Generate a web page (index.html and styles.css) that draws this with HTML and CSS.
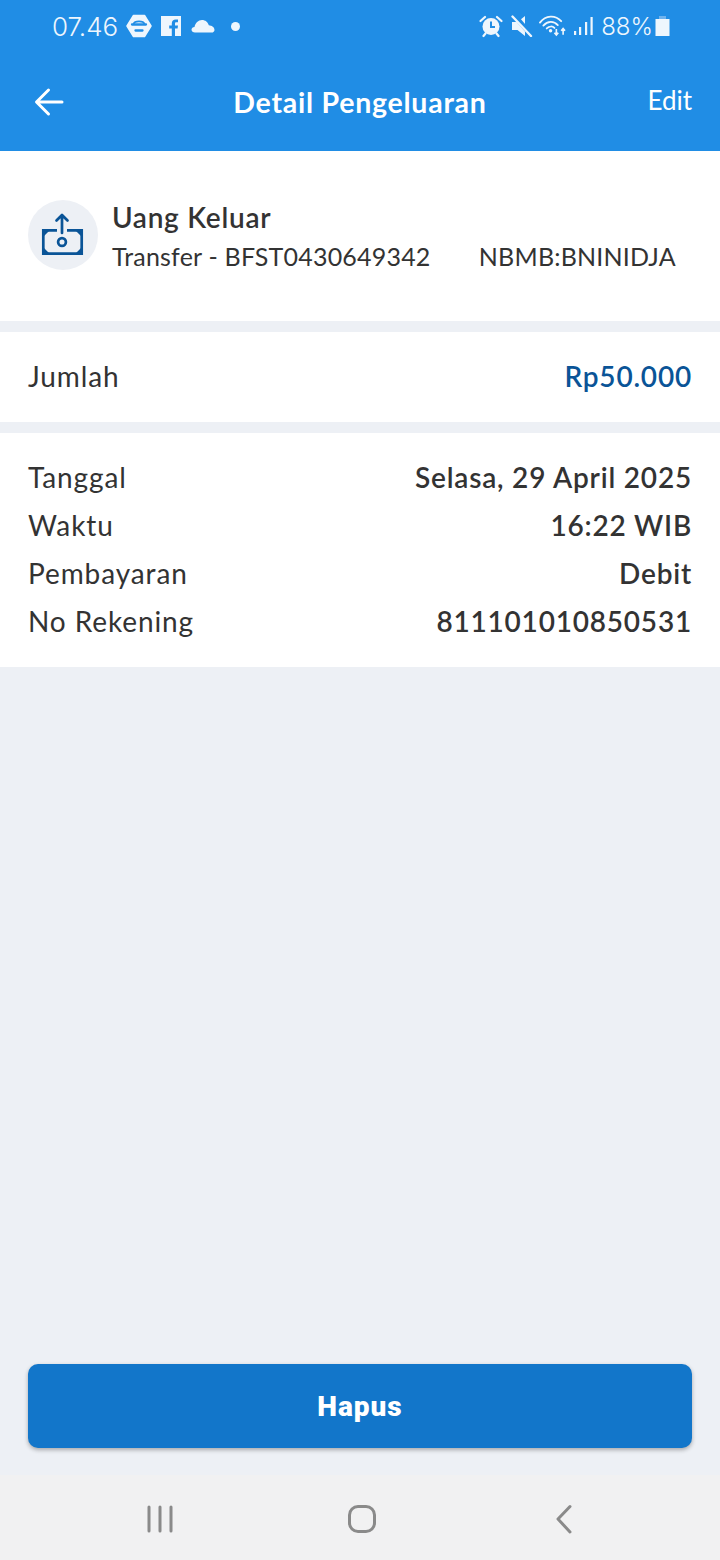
FILE: index.html
```html
<!DOCTYPE html>
<html lang="id">
<head>
<meta charset="utf-8">
<title>Detail Pengeluaran</title>
<link rel="stylesheet" href="styles.css">
</head>
<body>
<div class="screen">
  <header class="top">
    <div class="status">
      <div class="status-left">
        <span class="clock">07.46</span>
        <svg class="si" width="26" height="24" viewBox="0 0 26 24"><path fill="#eef6fd" d="M7.500 1.500h11L25 12l-6.500 10.500h-11L1 12z" stroke="#eef6fd" stroke-width="1.500" stroke-linejoin="round"/><path fill="none" stroke="#208de5" stroke-width="2.300" stroke-linecap="round" d="M6 10.500h14M9.500 16.500h7"/><path fill="none" stroke="#208de5" stroke-width="1.600" d="M7.500 10c1-3.500 10-3.500 11 0"/></svg>
        <svg class="si fb" width="20" height="20" viewBox="0 0 20 20"><path fill="#eef6fd" d="M0 0h20v20h-6v-7.500h2.600l.4-3h-3V7.700c0-.9.300-1.400 1.500-1.400H17V3.600c-.3 0-1.200-.1-2.300-.1-2.300 0-3.900 1.400-3.900 3.900v2.100H8.200v3h2.600V20H0z"/></svg>
        <svg class="si cloud" width="24" height="14" viewBox="0 0 24 14"><path fill="#eef6fd" d="M4 13.500c-2 0-3.500-1.100-3.500-2.700 0-1.500 1.300-2.700 3-2.800C4.300 4 7.300 1 11 1c3.300 0 6 2.200 6.800 5.300 3 .2 5.700 2 5.700 4.600 0 1.500-1.200 2.600-3 2.600z"/></svg>
        <span class="dot"></span>
      </div>
      <div class="status-right">
        <svg class="si" width="24" height="24" viewBox="0 0 24 24"><circle cx="12" cy="12.500" r="8.500" fill="#eef6fd"/><path fill="none" stroke="#208de5" stroke-width="2" d="M12 7.500v5.500h4"/><path fill="none" stroke="#eef6fd" stroke-width="2.200" stroke-linecap="round" d="M1.500 7 6 3M22.500 7 18 3M6.500 19.500 4.500 22M17.500 19.500l2 2.500"/></svg>
        <svg class="si mute" width="22" height="22" viewBox="0 0 22 22"><path fill="#eef6fd" d="M1 7h5.500L14 1v20l-7.500-6H1z"/><path stroke="#208de5" stroke-width="5" d="M3 0l19 22"/><path stroke="#eef6fd" stroke-width="2.400" stroke-linecap="round" d="M1.500 1.500 20 21"/></svg>
        <svg class="si wifi" width="27" height="22" viewBox="0 0 28 22"><g fill="none" stroke="#eef6fd" stroke-width="1.900" stroke-linecap="round"><path d="M1 7.500C7-.5 17-.5 23 6"/><path d="M4.500 10.500c4.500-5 11-5 15 -.5"/><path d="M8 13.500c2.700-2.500 6-2.500 8 -.5"/></g><circle cx="12" cy="16" r="1.800" fill="#eef6fd"/><path fill="none" stroke="#eef6fd" stroke-width="1.700" d="M18 14v6M16 18l2 2.300 2-2.300M25 20v-6M23 16l2-2.300 2 2.300"/></svg>
        <svg class="si bars" width="20" height="20" viewBox="0 0 20 20"><g fill="#eef6fd"><rect x="0" y="15" width="2.200" height="4"/><rect x="5" y="11" width="2.200" height="8"/><rect x="11" y="6" width="2.200" height="13"/><rect x="16.500" y="1" width="2.200" height="18"/></g></svg>
        <span class="pct">88%</span>
        <svg class="si batt" width="15" height="22" viewBox="0 0 15 22"><path fill="#6fb3ee" d="M4 1h7v3H4z"/><path fill="#eef6fd" d="M.500 4h14v17H.500z"/></svg>
      </div>
    </div>
    <div class="bar">
      <svg class="back" width="30" height="30" viewBox="0 0 30 30"><path fill="none" stroke="#fff" stroke-width="3" stroke-linecap="round" stroke-linejoin="round" d="M28 15H3M14.500 3 2.500 15l12 12"/></svg>
      <h1 class="title">Detail Pengeluaran</h1>
      <span class="edit">Edit</span>
    </div>
  </header>

  <section class="card summary">
    <div class="avatar">
      <svg width="44" height="44" viewBox="0 0 44 44"><g fill="none" stroke="#0a5497" stroke-width="2.700"><path d="M16 17.300H2.300v23.400h38.400V17.300H26"/><path d="M21 20V2M15.500 7.500 21 2l5.500 5.500" stroke-linecap="round" stroke-linejoin="round"/><circle cx="21" cy="29" r="3.900"/></g><g fill="#0a5497"><path d="M3 23v-6h6zM40 23v-6h-6zM3 35v5h5zM40 35v5h-5z"/></g></svg>
    </div>
    <div class="summary-text">
      <div class="kind">Uang Keluar</div>
      <div class="desc"><span>Transfer - BFST0430649342</span><span>NBMB:BNINIDJA</span></div>
    </div>
  </section>

  <section class="card amount">
    <span class="label">Jumlah</span>
    <span class="value blue">Rp50.000</span>
  </section>

  <section class="card details">
    <div class="row"><span class="label">Tanggal</span><span class="value">Selasa, 29 April 2025</span></div>
    <div class="row"><span class="label">Waktu</span><span class="value">16:22 WIB</span></div>
    <div class="row"><span class="label">Pembayaran</span><span class="value">Debit</span></div>
    <div class="row"><span class="label">No Rekening</span><span class="value">811101010850531</span></div>
  </section>

  <div class="footer">
    <button class="delete" type="button">Hapus</button>
  </div>

  <nav class="nav">
    <svg width="28" height="28" viewBox="0 0 28 28"><path fill="none" stroke="#8a8a8a" stroke-width="3" stroke-linecap="round" d="M3 2v24M14 2v24M25 2v24"/></svg>
    <svg class="home" width="30" height="30" viewBox="0 0 30 30"><rect x="2.500" y="2.500" width="25" height="25" rx="8.500" fill="none" stroke="#8a8a8a" stroke-width="3"/></svg>
    <svg width="20" height="30" viewBox="0 0 20 30"><path fill="none" stroke="#8a8a8a" stroke-width="3" stroke-linecap="round" stroke-linejoin="round" d="M16 2.500 4 15l12 13"/></svg>
  </nav>
</div>
</body>
</html>
```
FILE: styles.css
```css
* { box-sizing: border-box; }
html, body { margin: 0; padding: 0; }
body { width: 720px; height: 1560px; overflow: hidden; font-family: "Lato", "Open Sans", sans-serif; color: #333; }
.screen { width: 720px; height: 1560px; display: flex; flex-direction: column; background: #edf0f5; }

.top { height: 151px; background: #208de5; color: #fff; flex: none; box-shadow: 0 1px 2px rgba(0,0,0,.12); }
.status { height: 52px; padding: 0 50px 0 52px; display: flex; justify-content: space-between; align-items: center; color: #eef6fd; }
.status-left, .status-right { display: flex; align-items: center; }
.si { display: block; flex: none; }
.clock { font-family: "Inter", sans-serif; font-weight: 300; font-size: 26px; margin-right: 8px; }
.pct { font-family: "Inter", sans-serif; font-weight: 300; font-size: 24px; margin: 0 2px 0 7px; }
.fb { margin-left: 9px; }
.cloud { margin-left: 10px; }
.dot { width: 9px; height: 9px; border-radius: 50%; background: #eef6fd; margin-left: 16px; }
.mute { margin-left: 8px; }
.wifi { margin-left: 6px; }
.bars { margin-left: 8px; }

.bar { height: 99px; padding: 0 28px 0 34px; display: flex; align-items: center; position: relative; justify-content: space-between; }
.back { display: block; }
.title { margin: 0; position: absolute; left: 0; right: 0; text-align: center; font-size: 28.500px; font-weight: 700; letter-spacing: .75px; pointer-events: none; }
.edit { font-size: 26px; margin-bottom: 3px; }

.card { background: #fff; flex: none; }
.summary { height: 170px; padding: 48px 28px 0; display: flex; gap: 14px; margin-bottom: 11px; }
.avatar { width: 70px; height: 70px; border-radius: 50%; background: #edf0f5; display: flex; align-items: center; justify-content: center; flex: none; margin-top: 1px; }
.summary-text { flex: 1; }
.kind { font-size: 28px; font-weight: 600; line-height: 36px; letter-spacing: .75px; }
.desc { display: flex; justify-content: space-between; padding-right: 16px; font-size: 25px; line-height: 34px; margin-top: 4px; letter-spacing: .2px; }

.amount { height: 90px; padding: 0 28px 2px; display: flex; align-items: center; justify-content: space-between; margin-bottom: 11px; }
.label { font-size: 28px; letter-spacing: .9px; }
.value { font-size: 28px; font-weight: 600; letter-spacing: .8px; }
.blue { color: #0a5497; }

.details { height: 234px; padding: 20px 28px 0; }
.row { height: 48px; display: flex; align-items: center; justify-content: space-between; }

.footer { flex: 1; display: flex; align-items: flex-end; padding: 0 28px 27px; }
.delete { width: 100%; height: 84px; border: 0; border-radius: 10px; background: #1276ca; color: #fff; font-family: "Roboto", sans-serif; font-size: 28px; font-weight: 900; letter-spacing: 1px; box-shadow: 0 2px 4px rgba(0,0,0,.3); }

.nav { height: 85px; flex: none; background: #f1f1f2; display: flex; align-items: center; justify-content: space-between; padding: 3px 146px 0; }
.home { margin-left: -4px; }
```
